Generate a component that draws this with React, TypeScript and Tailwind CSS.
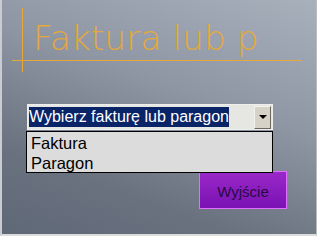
import React from "react";

export default function App() {
  return (
    <div className="relative w-[317px] h-[236px] overflow-hidden border-l-2 border-r border-b-2 border-l-[#c9cdd3] border-r-[#b8bcc2] border-b-[#dcdcdc] bg-[linear-gradient(200deg,#a8b0bc_0%,#8e96a4_40%,#6a7280_75%,#5f6876_100%)]">
      {/* decorative crosshair lines */}
      <div className="absolute left-[20px] top-[8px] w-px h-[64px] bg-[#e5a83a]" />
      <div className="absolute left-[10px] top-[60px] w-[290px] h-px bg-[#e5a83a]" />

      <div className="flex flex-col">
        <div
          className="pl-[31px] pt-[18px] h-[60px] text-[34.5px] leading-[40px] font-extralight text-[#e5a83a] whitespace-nowrap"
          style={{ fontFamily: '"DejaVu Sans", Lato, sans-serif' }}
        >
          Faktura lub p
        </div>

        <div className="relative ml-[25px] mt-[44px] w-[246px]" style={{ fontFamily: '"Liberation Sans", Arial, sans-serif' }}>
          {/* select box */}
          <div className="flex items-center h-[26px] border border-[#eeeeee] bg-[#e6e6e2] pl-[1px] pr-[1px]">
            <div className="h-[20px] w-[200px] bg-[#0a2468] text-white text-[16px] leading-[20px] whitespace-nowrap overflow-hidden">
              Wybierz fakturę lub paragon
            </div>
            <div className="ml-auto flex items-center justify-center w-[17px] h-[23px] bg-[#d6d2c8] border border-t-[#f4f2ec] border-l-[#f4f2ec] border-r-[#6a6860] border-b-[#6a6860]">
              <div className="w-0 h-0 border-l-[4px] border-r-[4px] border-t-[4px] border-l-transparent border-r-transparent border-t-black" />
            </div>
          </div>

          {/* dropdown list */}
          <div className="absolute left-[-1px] top-[27px] w-[247px] h-[42px] border border-black bg-[#dcdcdc] z-10 text-[16.5px] leading-[20px] text-black pl-[4px] pt-[1px]">
            <div>Faktura</div>
            <div>Paragon</div>
          </div>

          {/* exit button */}
          <div className="ml-[172px] mt-[41px] w-[88px] h-[38px] border border-[#e070ff] bg-[linear-gradient(180deg,#9a28c8_0%,#7a12b4_100%)] flex items-center justify-center">
            <span className="text-[15px] text-[#2a0a44] pt-[4px]">Wyjście</span>
          </div>
        </div>
      </div>
    </div>
  );
}
